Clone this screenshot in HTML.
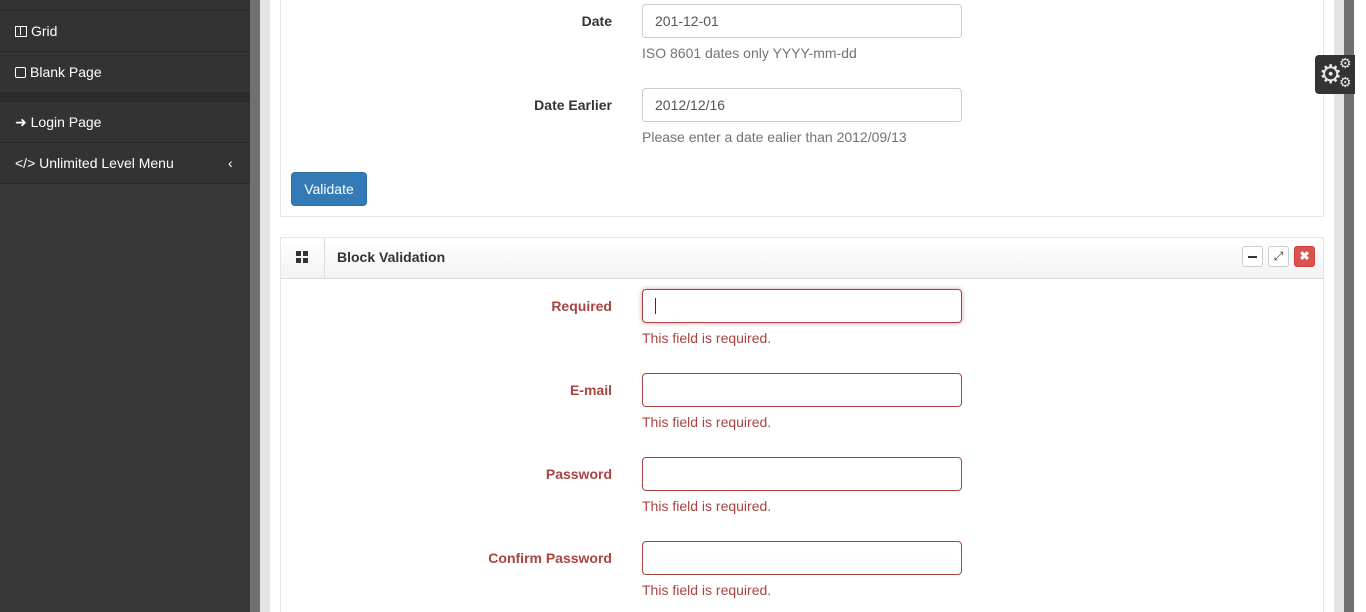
<!DOCTYPE html>
<html><head><meta charset="utf-8"><style>
*{margin:0;padding:0;box-sizing:border-box}
html{overflow:hidden;width:1366px;height:612px}
body{width:1366px;height:612px;overflow:hidden;background:#fff;font-family:"Liberation Sans",Arial,sans-serif;font-size:14px;position:relative}
.abs{position:absolute}
.side{left:0;top:0;width:250px;height:612px;background:#383838}
.item{position:absolute;left:0;width:250px;height:41px;background:#333;border-bottom:1px solid #2a2a2a;color:#fff;font-size:14px;line-height:40px;padding-left:15px}
.lbl{position:absolute;width:300px;left:312px;text-align:right;font-weight:bold;font-size:14px;color:#333}
.inp{position:absolute;left:642px;width:320px;height:34px;border:1px solid #ccc;border-radius:4px;padding:0 12px;line-height:32px;color:#555;font-size:14px}
.help{position:absolute;left:642px;color:#737373;font-size:14px}
.err .lbl{color:#a94442}
.e{border-color:#a94442}
.emsg{position:absolute;left:642px;color:#a94442;font-size:14px}
.tb{position:absolute;top:246px;width:21px;height:21px;border:1px solid #ccc;border-radius:3px;background:#fff}
</style></head><body>
<div class="abs side"></div>
<div class="item" style="top:0;height:11px"></div>
<div class="item" style="top:11px"><span style="display:inline-block;width:12px;height:11px;border:1.5px solid #fff;vertical-align:-1px;margin-right:4px;position:relative"><span style="position:absolute;left:3.5px;top:0;width:1.5px;height:8px;background:#fff"></span></span>Grid</div>
<div class="item" style="top:52px"><span style="display:inline-block;width:11px;height:11px;border:1.5px solid #fff;border-radius:2px;vertical-align:-1px;margin-right:4px"></span>Blank Page</div>
<div class="abs" style="left:0;top:93px;width:250px;height:9px;background:#2b2b2b"></div>
<div class="item" style="top:102px">➜ Login Page</div>
<div class="item" style="top:143px">&lt;/&gt; Unlimited Level Menu<span style="position:absolute;left:228px;font-size:14px">‹</span></div>
<div class="abs" style="left:250px;top:0;width:10px;height:612px;background:#707070"></div>
<div class="abs" style="left:260px;top:0;width:10px;height:612px;background:#e3e3e3"></div>
<div class="abs" style="left:1334px;top:0;width:10px;height:612px;background:#e3e3e3"></div>
<div class="abs" style="left:1344px;top:0;width:10px;height:612px;background:#707070"></div>

<div class="abs" style="left:280px;top:-1px;width:1044px;height:218px;border:1px solid #e6e6e6"></div>
<div class="lbl" style="top:13px">Date</div>
<div class="inp" style="top:4px">201-12-01</div>
<div class="help" style="top:45px">ISO 8601 dates only YYYY-mm-dd</div>
<div class="lbl" style="top:97px">Date Earlier</div>
<div class="inp" style="top:88px">2012/12/16</div>
<div class="help" style="top:129px">Please enter a date ealier than 2012/09/13</div>
<div class="abs" style="left:291px;top:172px;width:76px;height:34px;background:#337ab7;border:1px solid #2e6da4;border-radius:4px;color:#fff;text-align:center;line-height:32px">Validate</div>

<div class="abs" style="left:280px;top:237px;width:1044px;height:380px;border:1px solid #e6e6e6"></div>
<div class="abs" style="left:281px;top:238px;width:1042px;height:41px;background:linear-gradient(#fff,#f3f3f3);border-bottom:1px solid #ddd"></div>
<div class="abs" style="left:324px;top:238px;width:1px;height:41px;background:#ddd"></div>
<div class="abs" style="left:296px;top:251px;width:12px;height:12px;background:linear-gradient(90deg,#333 5px,transparent 5px,transparent 7px,#333 7px)"></div>
<div class="abs" style="left:296px;top:256px;width:12px;height:2px;background:#f8f8f8"></div>
<div class="abs" style="left:337px;top:249px;font-weight:bold;color:#333">Block Validation</div>
<div class="tb" style="left:1242px"><div class="abs" style="left:5px;top:9px;width:9px;height:2px;background:#333"></div></div>
<div class="tb" style="left:1268px;text-align:center;line-height:18px;font-size:12px;color:#333">⤢</div>
<div class="tb" style="left:1294px;background:#d9534f;border-color:#d43f3a;color:#fff;text-align:center;line-height:19px;font-size:12px;font-weight:bold">✖</div>

<div class="err">
<div class="lbl" style="top:298px">Required</div>
<div class="inp e" style="top:289px;box-shadow:0 0 5px rgba(169,68,66,.5)"><span style="display:inline-block;width:1px;height:16px;background:#333;vertical-align:-3px"></span></div>
<div class="emsg" style="top:330px">This field is required.</div>
<div class="lbl" style="top:382px">E-mail</div>
<div class="inp e" style="top:373px"></div>
<div class="emsg" style="top:414px">This field is required.</div>
<div class="lbl" style="top:466px">Password</div>
<div class="inp e" style="top:457px"></div>
<div class="emsg" style="top:498px">This field is required.</div>
<div class="lbl" style="top:550px">Confirm Password</div>
<div class="inp e" style="top:541px"></div>
<div class="emsg" style="top:582px">This field is required.</div>
</div>
<div class="abs" style="left:1315px;top:55px;width:40px;height:39px;background:#333;border-radius:4px 0 0 4px;color:#e8e8e8;z-index:5">
<span class="abs" style="left:4px;top:4px;font-size:26px;line-height:30px">⚙</span>
<span class="abs" style="left:24px;top:0px;font-size:14px;line-height:16px">⚙</span>
<span class="abs" style="left:24px;top:19px;font-size:14px;line-height:16px">⚙</span>
</div>
</body></html>
